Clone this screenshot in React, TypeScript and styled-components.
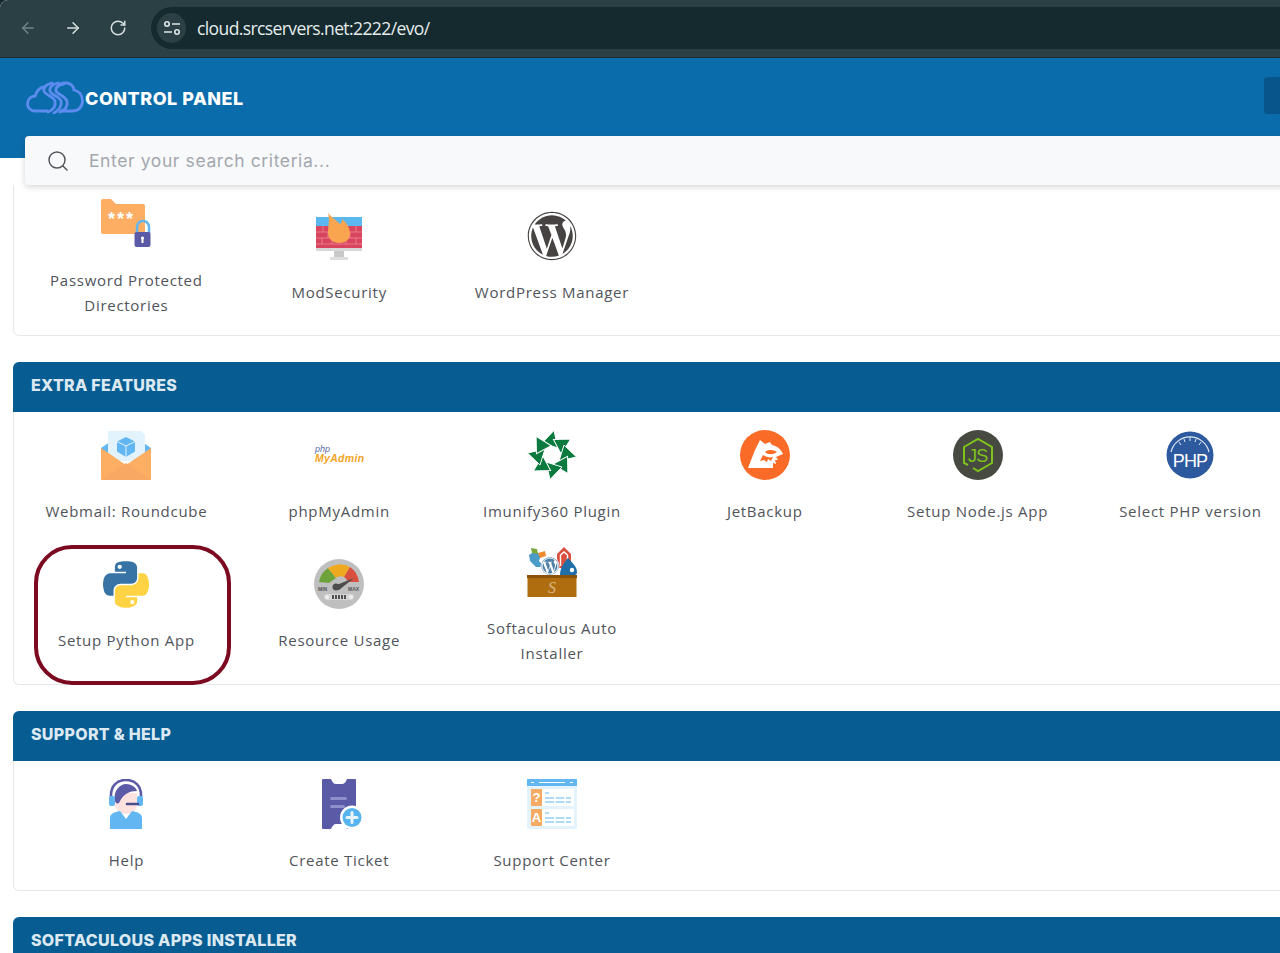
import React, { FC } from "react";
import styled, { createGlobalStyle } from "styled-components";
import { ArrowLeft, ArrowRight, RotateCw, Search } from "lucide-react";
import { FaWordpress } from "react-icons/fa";

const LABEL_FONT = `"Open Sans", "Noto Sans", sans-serif`;
const HEAD_FONT = `Inter, "Liberation Sans", sans-serif`;

const GlobalStyle = createGlobalStyle`
  html, body {
    margin: 0;
    padding: 0;
    background: #16282b;
    overflow: hidden;
  }
`;

const Page = styled.div`
  width: 1280px;
  height: 953px;
  overflow: hidden;
  background: #fff;
  border-top-left-radius: 8px;
`;

const BrowserBar = styled.div`
  display: flex;
  align-items: center;
  height: 58px;
  box-sizing: border-box;
  padding: 0 0 1px 19px;
  background: #2b4044;
  border-bottom: 1px solid #1f3034;
`;

const NavButton = styled.span<{ $dim?: boolean }>`
  display: flex;
  width: 18px;
  margin-right: 27px;
  color: ${(p) => (p.$dim ? "#6f8286" : "#d6dedf")};
`;

const UrlPill = styled.div`
  display: flex;
  align-items: center;
  gap: 11px;
  flex: 1;
  height: 42px;
  margin-left: -3px;
  padding-left: 6px;
  background: #142a2e;
  border-radius: 21px 0 0 21px;
`;

const InfoChip = styled.span`
  display: flex;
  align-items: center;
  justify-content: center;
  width: 29px;
  height: 30px;
  border-radius: 50%;
  background: #2b4044;
`;

const UrlText = styled.span`
  font-family: ${LABEL_FONT};
  font-size: 17.5px;
  letter-spacing: -0.6px;
  color: #e6eced;
`;

const Header = styled.header`
  display: flex;
  align-items: flex-start;
  justify-content: space-between;
  height: 100px;
  box-sizing: border-box;
  padding: 23px 0 0 26px;
  background: #0b6cab;
`;

const Brand = styled.div`
  display: flex;
  align-items: center;
  gap: 1px;
`;

const BrandName = styled.span`
  padding-top: 2px;
  font-family: ${HEAD_FONT};
  font-size: 18px;
  font-weight: 800;
  letter-spacing: 0.5px;
  color: #fff;
`;

const HeaderButton = styled.span`
  display: block;
  width: 16px;
  height: 37px;
  margin-top: -4px;
  background: #07558a;
  border-radius: 4px 0 0 4px;
`;

const SearchBar = styled.div`
  position: relative;
  z-index: 2;
  display: flex;
  align-items: center;
  gap: 19px;
  width: 1290px;
  height: 49px;
  box-sizing: border-box;
  margin: -22px 0 0 25px;
  padding-left: 21px;
  background: #f8f9fb;
  border-radius: 4px 0 0 4px;
  box-shadow: 0 2px 6px rgba(0, 0, 0, 0.16);
  color: #54585c;
`;

const SearchHint = styled.span`
  font-family: ${HEAD_FONT};
  font-size: 17.5px;
  letter-spacing: 0.6px;
  color: #a3a7ae;
`;

const Panel = styled.section`
  width: 1300px;
  margin: 0 0 26px 13px;
`;

const PanelHead = styled.h2`
  height: 50px;
  box-sizing: border-box;
  margin: 0;
  padding-left: 18px;
  background: #075d92;
  border-radius: 6px 6px 0 0;
  font-family: ${HEAD_FONT};
  font-size: 16px;
  font-weight: 800;
  line-height: 47px;
  letter-spacing: 0.3px;
  color: #dce9f3;
`;

const PanelBody = styled.div<{ $top: number; $bottom: number }>`
  display: grid;
  grid-template-columns: repeat(6, 212.8px);
  row-gap: 23.5px;
  align-items: center;
  padding: ${(p) => p.$top}px 0 ${(p) => p.$bottom}px 6px;
  border: 1px solid #e6e8ea;
  border-top: 0;
  border-radius: 0 0 6px 6px;
`;

const Item = styled.div<{ $marked?: boolean }>`
  position: relative;
  display: flex;
  flex-direction: column;
  align-items: center;

  ${(p) =>
    p.$marked &&
    `
    &::after {
      content: "";
      position: absolute;
      left: 14px;
      right: 2px;
      top: -14.5px;
      bottom: -32px;
      border: 4px solid #7b0a20;
      border-radius: 38px;
    }
  `}
`;

const IconBox = styled.span`
  display: flex;
  align-items: center;
  justify-content: center;
  width: 50px;
  height: 50px;
  margin-bottom: 19px;
`;

const Label = styled.div`
  max-width: 175px;
  font-family: ${LABEL_FONT};
  font-size: 15px;
  line-height: 24.5px;
  letter-spacing: 0.72px;
  text-align: center;
  color: #50545a;
`;

const Svg: FC<{ children: React.ReactNode }> = ({ children }) => (
  <svg width="50" height="50" viewBox="0 0 50 50">
    {children}
  </svg>
);

const SiteInfoIcon = () => (
  <svg width="18" height="14" viewBox="0 0 18 14" fill="none" stroke="#dfe6e7" strokeWidth="1.6">
    <circle cx="4" cy="3" r="2.2" />
    <path d="M9 3h8M1 11h8" />
    <circle cx="14" cy="11" r="2.2" />
  </svg>
);

const LogoIcon = () => (
  <svg width="58" height="33" viewBox="0 0 58 33" fill="none" stroke="#5d8cf0" strokeWidth="2.8" strokeLinecap="round">
    <path d="M21 30H9C4 30 1.500 26 1.500 23C1.500 18 5 15 9 15C11 9 15 6 19 6" />
    <path d="M31 6C33 3 37 1.500 41 2C45 2.500 48 6 48 9C53 10 56.500 14 56.500 20C56.500 26 52 30 47 30H35" />
    <path d="M26 2C21 3 17 6 18 10C19 14 27 15 29 20C30 25 27 29 22 31" />
    <path d="M32 2C27 3 23 6 24 10C25 14 33 15 35 20C36 25 33 29 28 32" />
    <path d="M38 3C33 4 29 6 30 10C31 13 39 15 41 20C42 25 39 29 34 31" />
  </svg>
);

const PasswordIcon = () => (
  <Svg>
    <path d="M0 2a2 2 0 0 1 2-2h8l5 5h27a2 2 0 0 1 2 2v26a2 2 0 0 1-2 2H2a2 2 0 0 1-2-2z" fill="#fdae63" />
    <text x="7" y="26" fontFamily="Liberation Sans, sans-serif" fontSize="18" fontWeight="700" letterSpacing="2" fill="#fff">***</text>
    <path d="M36 34v-6a6 6 0 0 1 12 0v6" fill="none" stroke="#62b6ef" strokeWidth="2.500" />
    <rect x="33.500" y="33" width="16" height="15" rx="2" fill="#5a5aa6" />
    <rect x="40.500" y="39" width="2" height="5" fill="#fff" />
    <circle cx="41.500" cy="39" r="1.600" fill="#fff" />
  </Svg>
);

const ModSecurityIcon = () => (
  <Svg>
    <rect x="2" y="6" width="46" height="9" fill="#5bb8ee" />
    <rect x="2" y="15" width="46" height="22" fill="#d9445e" />
    <path d="M2 21h46M2 27h46M2 33h46M9 15v6M19 15v6M32 15v6M42 15v6M14 21v6M36 21v6M8 27v6M18 27v6M32 27v6M42 27v6" stroke="#ee8a98" strokeWidth="0.8" />
    <rect x="2" y="37" width="46" height="3" fill="#d7d7d7" />
    <rect x="20" y="40" width="10" height="6" fill="#c9c9c9" />
    <rect x="16" y="46" width="18" height="3" fill="#dedede" />
    <path d="M14 2C17 6 22 9 26 13C28 11 28 10 28 8C33 12 36 17 36 23C36 29 31 32 25 32C19 32 14 28 14 22C14 15 16 9 14 2Z" fill="#f9a44f" />
  </Svg>
);

const WebmailIcon = () => (
  <Svg>
    <path d="M0 18L25 1L50 18V30H0z" fill="#62b7f2" />
    <path d="M7 1h33l4 4v26H7z" fill="#e2f3fd" />
    <path d="M25 7l9 4.500v10L25 27l-9-5.500v-10z" fill="#62b7f2" />
    <path d="M16 11.500l9 4.500l9-4.500M25 16v11" stroke="#e2f3fd" strokeWidth="1" fill="none" />
    <path d="M0 18L25 35L50 18V49a1 1 0 0 1-1 1H1a1 1 0 0 1-1-1z" fill="#fdae63" />
    <path d="M0 50L25 33L50 50z" fill="#f9a864" />
  </Svg>
);

const PmaIcon = () => (
  <Svg>
    <text x="1" y="21.500" fontFamily="Liberation Sans, sans-serif" fontStyle="italic" fontSize="9" fill="#5d6aa8">php</text>
    <text x="1" y="32" fontFamily="Liberation Sans, sans-serif" fontStyle="italic" fontWeight="700" fontSize="10.500" letterSpacing="0.3" fill="#f3a31f">MyAdmin</text>
  </Svg>
);

const ImunifyIcon = () => (
  <Svg>
    {[0, 45, 90, 135, 180, 225, 270, 315].map((deg) => (
      <polygon
        key={deg}
        points="27,0.500 15,13 31,18"
        fill="#0b7a3e"
        stroke="#fff"
        strokeWidth="1"
        transform={`rotate(${deg} 25 25)`}
      />
    ))}
  </Svg>
);

const JetBackupIcon = () => (
  <Svg>
    <circle cx="25" cy="25" r="25" fill="#f96b27" />
    <path d="M8 38L15 20L20 10L25 14L30 12L32 15C37 16 41 19 43 24L36 27L38 30L35 30L36 34L33 33L33 38z" fill="#fff" />
    <path d="M25 22C29 19 34 20 37 22C33 25 28 25 25 22z" fill="#f96b27" />
    <path d="M20 31L23 25C26 27 30 28 33 27L31 31L28 29L27 32L24 30z" fill="#f96b27" />
  </Svg>
);

const NodeIcon = () => (
  <Svg>
    <circle cx="25" cy="25" r="25" fill="#474a41" />
    <path d="M15 35L11 33V17L25 9L39 17V33L25 41L20 38" fill="none" stroke="#7fc31c" strokeWidth="2" />
    <text x="15" y="32" fontFamily="Liberation Sans, sans-serif" fontSize="18" fill="#7fc31c" letterSpacing="-0.8">JS</text>
  </Svg>
);

const PhpIcon = () => (
  <Svg>
    <circle cx="25" cy="25" r="23.500" fill="#2d5a9e" />
    <path d="M6 22A19.500 19.500 0 0 1 44 22" fill="none" stroke="#dfe8f4" strokeWidth="1.200" />
    <path d="M14 12l2 3M25 7v4M36 12l-2 3M19 9l1 3M31 9l-1 3" stroke="#dfe8f4" strokeWidth="1" />
    <text x="25" y="37" textAnchor="middle" fontFamily="Liberation Sans, sans-serif" fontSize="18" letterSpacing="-0.8" fill="#fff">PHP</text>
  </Svg>
);

const PythonIcon = () => (
  <svg width="46" height="47" viewBox="0 0 111 112" fillRule="evenodd">
    <path
      d="M54.9 0C50.3 0 46 .4 42.100 1.100C30.800 3.100 28.700 7.300 28.700 15V25.300H55.500V28.700H18.600C10.800 28.700 4 33.300 1.900 42.300C-.6 52.500-.7 58.800 1.900 69.500C3.800 77.400 8.300 83.100 16.100 83.100H25.400V70.800C25.400 62 33 54.200 42.100 54.200H68.900C76.300 54.200 82.300 48 82.300 40.600V15C82.300 7.800 76.200 2.300 68.900 1.100C64.300.3 59.500 0 54.900 0ZM40.400 8.200C43.200 8.200 45.400 10.500 45.400 13.300C45.400 16.200 43.200 18.400 40.400 18.400C37.600 18.400 35.400 16.200 35.400 13.300C35.400 10.500 37.600 8.200 40.400 8.200Z"
      fill="#3773a5"
    />
    <path
      d="M85.600 28.700V40.600C85.600 49.800 77.800 57.600 68.900 57.600H42.100C34.800 57.600 28.700 63.800 28.700 71.200V96.700C28.700 104 35 108.300 42.100 110.300C50.600 112.800 58.700 113.300 68.900 110.300C75.600 108.400 82.300 104.500 82.300 96.700V86.500H55.500V83.100H95.700C103.500 83.100 106.400 77.700 109.100 69.500C111.900 61.100 111.800 53 109.100 42.300C107.200 34.500 103.500 28.700 95.700 28.700ZM70.600 93.300C73.400 93.300 75.700 95.600 75.700 98.400C75.700 101.200 73.400 103.500 70.600 103.500C67.900 103.500 65.600 101.200 65.600 98.400C65.600 95.600 67.900 93.300 70.600 93.300Z"
      fill="#ffd343"
    />
  </svg>
);

const ResourceIcon = () => (
  <Svg>
    <circle cx="25" cy="25" r="25" fill="#bfbfbf" />
    <path d="M5 23A21 21 0 0 1 14 9L22 19L15 24z" fill="#6ea23b" />
    <path d="M14 9A21 21 0 0 1 36 8L30 18C27 17 24 17 22 19z" fill="#efa91f" />
    <path d="M36 8A21 21 0 0 1 45 23L34 23C33 21 32 19 30 18z" fill="#d9503f" />
    <path d="M20 27L40 19L25 31z" fill="#4d4d4d" />
    <circle cx="22" cy="28" r="3.500" fill="#4d4d4d" />
    <text x="4" y="32" fontFamily="Liberation Sans, sans-serif" fontSize="5" fontWeight="700" fill="#555">MIN</text>
    <text x="34" y="32" fontFamily="Liberation Sans, sans-serif" fontSize="5" fontWeight="700" fill="#555">MAX</text>
    <rect x="10" y="35" width="30" height="6" rx="3" fill="#d5d5d5" />
    <circle cx="13" cy="38" r="2" fill="#eee" />
    <circle cx="37" cy="38" r="2" fill="#eee" />
    <path d="M19 36v4M22 36v4M25 36v4M28 36v4M31 36v4" stroke="#444" strokeWidth="1.800" />
  </Svg>
);

const SoftaculousIcon = () => (
  <Svg>
    <path d="M2 8L8 4L14 8L12 14L17 20L9 20L3 14z" fill="#4b9bc9" />
    <path d="M4 1l6 1l1 5l-6-1z" fill="#7aa83a" />
    <path d="M11 6l7-2l1 5l-6 2z" fill="#ef8b2c" />
    <path d="M30 7l7-7l7 7v14H30z" fill="#d9503f" />
    <path d="M33.500 19V8l3.500-3l3.500 3v11" fill="none" stroke="#fff" strokeWidth="1.400" />
    <path d="M33 28C33 20 38 15 41 11C44 15 50 19 50 25C50 27 49 28 48 28z" fill="#1f6ea8" />
    <circle cx="45" cy="23" r="2.200" fill="#fff" />
    <circle cx="23" cy="19" r="9.500" fill="#fff" />
    <FaWordpress x="14" y="10" size="18" color="#4d7fa8" />
    <rect x="0" y="28" width="50" height="3" fill="#8a5309" />
    <rect x="0.500" y="31" width="49" height="19" fill="#b06d10" />
    <text x="25" y="46" textAnchor="middle" fontFamily="Liberation Serif, serif" fontStyle="italic" fontSize="16" fill="#d8b87f">S</text>
  </Svg>
);

const HelpIcon = () => (
  <Svg>
    <path d="M10 22V16C10 7 16 1 25 1C34 1 40 7 40 16V22" fill="none" stroke="#5a5aa6" strokeWidth="2.600" />
    <path d="M14 25C14 31 19 35 25 35C31 35 36 31 36 25V14H14z" fill="#fde2df" />
    <path d="M14 21C12 12 19 5 25 5C30 5 35 8 36 12C28 12 22 15 18 24C16 25 14 24 14 21z" fill="#5a5aa6" />
    <rect x="8" y="17" width="6" height="10" rx="2" fill="#62b7f2" />
    <rect x="36" y="17" width="6" height="10" rx="2" fill="#62b7f2" />
    <path d="M26 25H37" stroke="#4c4c8c" strokeWidth="2.600" strokeLinecap="round" />
    <path d="M9 50V39C9 35 13 33 19 32L25 40L31 32C37 33 41 35 41 39V50z" fill="#62b7f2" />
  </Svg>
);

const TicketIcon = () => (
  <Svg>
    <path d="M9 0H17C18 3 20 5 22 5H28C30 5 32 3 33 0H41a1 1 0 0 1 1 1V49a1 1 0 0 1-1 1H33C32 47 30 45 28 45H22C20 45 18 47 17 50H9a1 1 0 0 1-1-1V1a1 1 0 0 1 1-1z" fill="#5a5aa6" />
    <rect x="16" y="18" width="17" height="3" rx="1.500" fill="#8f8fcb" />
    <rect x="16" y="26" width="15" height="3" rx="1.500" fill="#8f8fcb" />
    <circle cx="38" cy="38.500" r="12" fill="#fff" />
    <circle cx="38" cy="38.500" r="9.500" fill="#58b4ee" />
    <path d="M38 33.500v10M33 38.500h10" stroke="#e8f5fd" strokeWidth="3" strokeLinecap="round" />
  </Svg>
);

const SupportIcon = () => (
  <Svg>
    <rect x="0" y="0" width="50" height="50" rx="1.500" fill="#e3f3fd" />
    <rect x="0" y="0" width="50" height="7" fill="#62b7f2" />
    <path d="M12 3.500h26M4 3.500h3M43 3.500h3" stroke="#fff" strokeWidth="1.200" />
    <rect x="4" y="10" width="43" height="17" fill="#fff" />
    <rect x="4" y="30" width="43" height="17" fill="#fff" />
    <rect x="4" y="10" width="11" height="17" fill="#f5ab64" />
    <rect x="4" y="30" width="11" height="17" fill="#f5ab64" />
    <text x="9.500" y="23" textAnchor="middle" fontFamily="Liberation Sans, sans-serif" fontSize="13" fontWeight="700" fill="#fff">?</text>
    <text x="9.500" y="43" textAnchor="middle" fontFamily="Liberation Sans, sans-serif" fontSize="13" fontWeight="700" fill="#fff">A</text>
    <path d="M18 14h4M18 19h26M18 23h26M18 34h4M18 39h26M18 43h26" stroke="#62b7f2" strokeWidth="1.200" strokeDasharray="9 1.500" />
  </Svg>
);

const WordPressIcon = () => <FaWordpress size={50} color="#464342" />;

type Feature = { label: string; icon: React.ReactNode; marked?: boolean };

const security: Feature[] = [
  { label: "Password Protected Directories", icon: <PasswordIcon /> },
  { label: "ModSecurity", icon: <ModSecurityIcon /> },
  { label: "WordPress Manager", icon: <WordPressIcon /> },
];

const extras: Feature[] = [
  { label: "Webmail: Roundcube", icon: <WebmailIcon /> },
  { label: "phpMyAdmin", icon: <PmaIcon /> },
  { label: "Imunify360 Plugin", icon: <ImunifyIcon /> },
  { label: "JetBackup", icon: <JetBackupIcon /> },
  { label: "Setup Node.js App", icon: <NodeIcon /> },
  { label: "Select PHP version", icon: <PhpIcon /> },
  { label: "Setup Python App", icon: <PythonIcon />, marked: true },
  { label: "Resource Usage", icon: <ResourceIcon /> },
  { label: "Softaculous Auto Installer", icon: <SoftaculousIcon /> },
];

const support: Feature[] = [
  { label: "Help", icon: <HelpIcon /> },
  { label: "Create Ticket", icon: <TicketIcon /> },
  { label: "Support Center", icon: <SupportIcon /> },
];

const Features: FC<{ items: Feature[]; top?: number; bottom: number }> = ({ items, top = 18, bottom }) => (
  <PanelBody $top={top} $bottom={bottom}>
    {items.map((item) => (
      <Item key={item.label} $marked={item.marked}>
        <IconBox>{item.icon}</IconBox>
        <Label>{item.label}</Label>
      </Item>
    ))}
  </PanelBody>
);

export default function App() {
  return (
    <Page>
      <GlobalStyle />
      <BrowserBar>
        <NavButton $dim><ArrowLeft size={18} /></NavButton>
        <NavButton><ArrowRight size={18} /></NavButton>
        <NavButton><RotateCw size={18} /></NavButton>
        <UrlPill>
          <InfoChip><SiteInfoIcon /></InfoChip>
          <UrlText>cloud.srcservers.net:2222/evo/</UrlText>
        </UrlPill>
      </BrowserBar>
      <Header>
        <Brand>
          <LogoIcon />
          <BrandName>CONTROL PANEL</BrandName>
        </Brand>
        <HeaderButton />
      </Header>
      <SearchBar>
        <Search size={24} strokeWidth={1.5} />
        <SearchHint>Enter your search criteria...</SearchHint>
      </SearchBar>
      <Panel>
        <Features items={security} top={14} bottom={18} />
      </Panel>
      <Panel>
        <PanelHead>EXTRA FEATURES</PanelHead>
        <Features items={extras} bottom={19} />
      </Panel>
      <Panel>
        <PanelHead>SUPPORT &amp; HELP</PanelHead>
        <Features items={support} bottom={17.5} />
      </Panel>
      <Panel>
        <PanelHead>SOFTACULOUS APPS INSTALLER</PanelHead>
      </Panel>
    </Page>
  );
}
